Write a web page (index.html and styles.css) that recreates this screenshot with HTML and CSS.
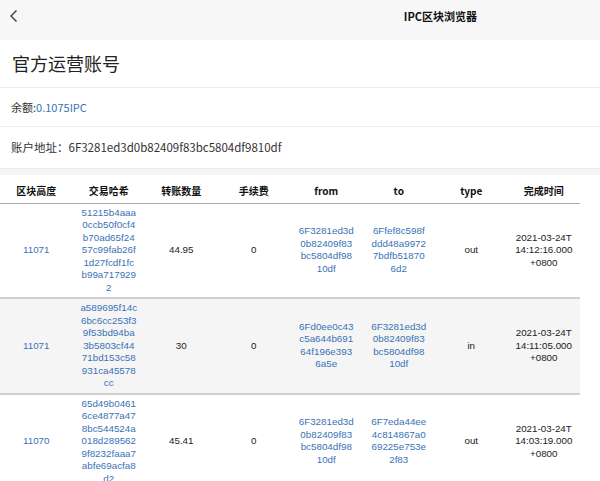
FILE: index.html
```html
<!DOCTYPE html>
<html lang="zh-CN">
<head>
<meta charset="utf-8">
<title>IPC区块浏览器</title>
<link rel="stylesheet" href="styles.css">
</head>
<body>
<header class="topbar">
  <span class="back">
    <svg width="10" height="14" viewBox="0 0 10 14"><path d="M7.5 1.5 L2 7 L7.5 12.5" fill="none" stroke="#333" stroke-width="1.3"/></svg>
  </span>
  <span class="app-title">IPC区块浏览器</span>
</header>

<section class="account">
  <h1 class="account-name">官方运营账号</h1>
  <div class="info-row balance">余额:<span class="link">0.1075IPC</span></div>
  <div class="info-row address">账户地址：6F3281ed3d0b82409f83bc5804df9810df</div>
</section>

<div class="gap"></div>

<table class="tx">
  <thead>
    <tr>
      <th>区块高度</th><th>交易哈希</th><th>转账数量</th><th>手续费</th><th>from</th><th>to</th><th>type</th><th>完成时间</th>
    </tr>
  </thead>
  <tbody>
    <tr>
      <td class="link">11071</td>
      <td class="link">51215b4aaa<br>0ccb50f0cf4<br>b70ad65f24<br>57c99fab26f<br>1d27fcdf1fc<br>b99a717929<br>2</td>
      <td>44.95</td>
      <td>0</td>
      <td class="link">6F3281ed3d<br>0b82409f83<br>bc5804df98<br>10df</td>
      <td class="link">6Ffef8c598f<br>ddd48a9972<br>7bdfb51870<br>6d2</td>
      <td>out</td>
      <td>2021-03-24T<br>14:12:16.000<br>+0800</td>
    </tr>
    <tr class="alt">
      <td class="link">11071</td>
      <td class="link">a589695f14c<br>6bc6cc253f3<br>9f53bd94ba<br>3b5803cf44<br>71bd153c58<br>931ca45578<br>cc</td>
      <td>30</td>
      <td>0</td>
      <td class="link">6Fd0ee0c43<br>c5a644b691<br>64f196e393<br>6a5e</td>
      <td class="link">6F3281ed3d<br>0b82409f83<br>bc5804df98<br>10df</td>
      <td>in</td>
      <td>2021-03-24T<br>14:11:05.000<br>+0800</td>
    </tr>
    <tr>
      <td class="link">11070</td>
      <td class="link">65d49b0461<br>6ce4877a47<br>8bc544524a<br>018d289562<br>9f8232faaa7<br>abfe69acfa8<br>d2</td>
      <td>45.41</td>
      <td>0</td>
      <td class="link">6F3281ed3d<br>0b82409f83<br>bc5804df98<br>10df</td>
      <td class="link">6F7eda44ee<br>4c814867a0<br>69225e753e<br>2f83</td>
      <td>out</td>
      <td>2021-03-24T<br>14:03:19.000<br>+0800</td>
    </tr>
  </tbody>
</table>
</body>
</html>
```

FILE: styles.css
```css
* { box-sizing: border-box; }
html, body { margin: 0; padding: 0; background: #fff; }
body {
  font-family: "Noto Sans CJK SC", "Noto Sans", sans-serif;
  color: #222;
  width: 600px;
  overflow: hidden;
}
.topbar {
  height: 40px;
  background: #f7f7f7;
  display: flex;
  align-items: flex-start;
  padding: 8px 0 0 9px;
}
.back { display: flex; height: 16px; align-items: center; }
.app-title {
  margin-left: auto;
  margin-right: 123px;
  font-size: 11px;
  font-weight: bold;
  line-height: 16px;
  color: #111;
}
.account-name {
  margin: 0;
  font-size: 18px;
  font-weight: normal;
  line-height: 47px;
  padding-left: 12px;
  border-bottom: 1px solid #ececec;
  color: #222;
}
.info-row {
  font-size: 11px;
  line-height: 38px;
  padding-left: 11px;
  border-bottom: 1px solid #ececec;
  color: #333;
}
.info-row.address { line-height: 41px; font-size: 11.5px; }
.link { color: #3a72b6; }
.gap { height: 6px; background: #f5f5f5; }
.tx {
  width: 580px;
  table-layout: fixed;
  border-collapse: collapse;
  font-size: 10px;
}
.tx th {
  height: 28px;
  font-weight: bold;
  font-size: 10px;
  color: #111;
  padding: 4px 0 0;
  border-bottom: 1px solid #a8a8a8;
}
.tx td {
  font-family: "Liberation Sans", "Noto Sans CJK SC", sans-serif;
  font-size: 9.8px;
  text-align: center;
  vertical-align: middle;
  line-height: 12.5px;
  padding: 3px 0;
  border-bottom: 2px solid #d0d0d0;
}
.tx tr.alt td { background: #f5f5f5; }
```
